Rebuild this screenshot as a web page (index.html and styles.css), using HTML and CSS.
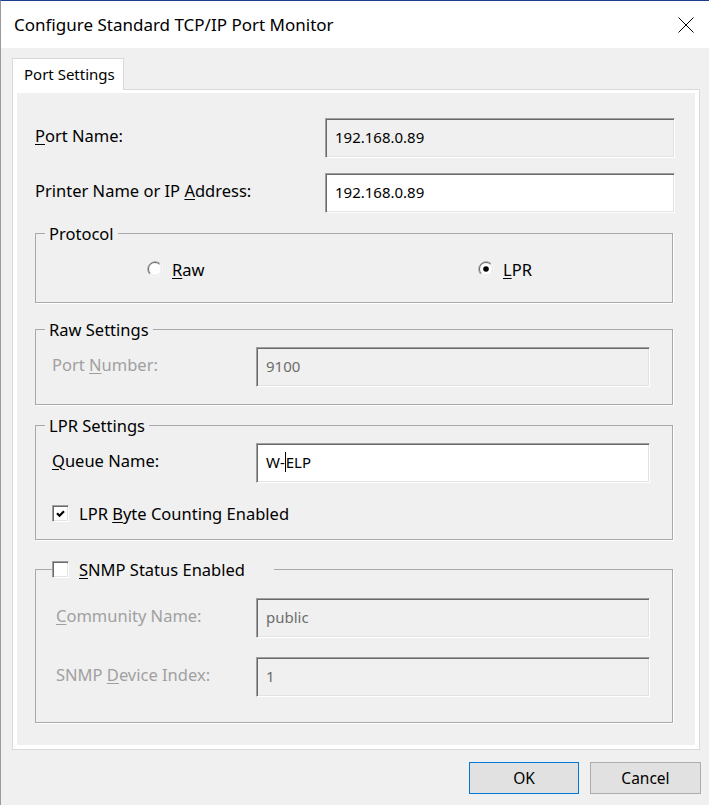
FILE: index.html
```html
<!DOCTYPE html>
<html>
<head>
  <title>Configure Standard TCP/IP Port Monitor</title>
  <meta charset="utf-8">
  <link rel="stylesheet" href="styles.css">
</head>
<body>
  <div class="window">
    <div class="titlebar">
      <span class="title">Configure Standard TCP/IP Port Monitor</span>
      <svg class="close" width="16" height="16" viewBox="0 0 16 16">
        <path d="M0.5 0.5 L15.5 15.5 M15.5 0.5 L0.5 15.5" stroke="#000" stroke-width="1" fill="none"/>
      </svg>
    </div>
    <div class="body">
      <div class="tabs">
        <div class="tab">Port Settings</div>
      </div>
      <div class="panel">
        <div class="page">
          <div class="row first">
            <span class="label"><u>P</u>ort Name:</span>
            <div class="field readonly">192.168.0.89</div>
          </div>
          <div class="row">
            <span class="label">Printer Name or IP <u>A</u>ddress:</span>
            <div class="field">192.168.0.89</div>
          </div>

          <fieldset class="group protocol">
            <legend>Protocol</legend>
            <div class="radios">
              <span class="radio">
                <svg width="16" height="16" viewBox="0 0 16 16">
                  <circle cx="8" cy="8" r="6.5" fill="#fff"/>
                  <path d="M2.7 13.3 A7.5 7.5 0 0 1 13.3 2.7" stroke="#a0a0a0" fill="none"/>
                  <path d="M13.3 2.7 A7.5 7.5 0 0 1 2.7 13.3" stroke="#fff" fill="none"/>
                  <path d="M3.4 12.6 A6.5 6.5 0 0 1 12.6 3.4" stroke="#696969" fill="none"/>
                  <path d="M12.6 3.4 A6.5 6.5 0 0 1 3.4 12.6" stroke="#e3e3e3" fill="none"/>
                </svg>
                <span><u>R</u>aw</span>
              </span>
              <span class="radio">
                <svg width="16" height="16" viewBox="0 0 16 16">
                  <circle cx="8" cy="8" r="6.5" fill="#fff"/>
                  <path d="M2.7 13.3 A7.5 7.5 0 0 1 13.3 2.7" stroke="#a0a0a0" fill="none"/>
                  <path d="M13.3 2.7 A7.5 7.5 0 0 1 2.7 13.3" stroke="#fff" fill="none"/>
                  <path d="M3.4 12.6 A6.5 6.5 0 0 1 12.6 3.4" stroke="#696969" fill="none"/>
                  <path d="M12.6 3.4 A6.5 6.5 0 0 1 3.4 12.6" stroke="#e3e3e3" fill="none"/>
                  <circle cx="8" cy="8" r="2.8" fill="#000"/>
                </svg>
                <span><u>L</u>PR</span>
              </span>
            </div>
          </fieldset>

          <fieldset class="group raw">
            <legend>Raw Settings</legend>
            <div class="grow">
              <span class="label disabled">Port <u>N</u>umber:</span>
              <div class="field readonly dim">9100</div>
            </div>
          </fieldset>

          <fieldset class="group lpr">
            <legend>LPR Settings</legend>
            <div class="grow">
              <span class="label"><u>Q</u>ueue Name:</span>
              <div class="field">W-<span class="caret"></span>ELP</div>
            </div>
            <div class="checkrow">
              <span class="check">
                <svg width="11" height="11" viewBox="0 0 11 11">
                  <path d="M2 5.2 L4.5 7.7 L9 3.2" stroke="#000" stroke-width="2.2" fill="none"/>
                </svg>
              </span>
              <span>LPR <u>B</u>yte Counting Enabled</span>
            </div>
          </fieldset>

          <fieldset class="group snmp">
            <legend>
              <span class="check"></span>
              <span><u>S</u>NMP Status Enabled</span>
            </legend>
            <div class="grow">
              <span class="label disabled"><u>C</u>ommunity Name:</span>
              <div class="field readonly dim">public</div>
            </div>
            <div class="grow second">
              <span class="label disabled">SNMP <u>D</u>evice Index:</span>
              <div class="field readonly dim">1</div>
            </div>
          </fieldset>
        </div>
      </div>
      <div class="buttons">
        <button class="btn default">OK</button>
        <button class="btn">Cancel</button>
      </div>
    </div>
  </div>
</body>
</html>
```

FILE: styles.css
```css
body {
  margin: 0;
  font-family: "Segoe UI", "Noto Sans", "Liberation Sans", sans-serif;
  font-size: 16.5px;
  color: #000;
}
u {
  text-decoration-thickness: 1px;
  text-underline-offset: 2px;
}
.window {
  width: 709px;
  height: 805px;
  box-sizing: border-box;
  border-top: 1px solid #1b3f8f;
  border-left: 1px solid #9a9a9a;
  background: #f0f0f0;
  overflow: hidden;
}
.titlebar {
  height: 47px;
  background: #fff;
  display: flex;
  align-items: center;
  justify-content: space-between;
  padding: 0 15px 0 13px;
}
.title {
  font-size: 17px;
}
.body {
  padding-top: 10px;
}
.tabs {
  display: flex;
  margin-left: 11px;
}
.tab {
  position: relative;
  z-index: 1;
  width: 112px;
  height: 32px;
  box-sizing: border-box;
  background: #fff;
  border: 1px solid #d9d9d9;
  border-bottom: none;
  margin-bottom: -1px;
  padding-left: 11px;
  line-height: 30px;
  font-size: 15px;
}
.panel {
  margin-left: 11px;
  width: 688px;
  height: 661px;
  box-sizing: border-box;
  border: 1px solid #d9d9d9;
  background: #fff;
  padding: 3px 4px 4px 4px;
}
.page {
  background: #f0f0f0;
  height: 652px;
  padding-top: 25px;
  box-sizing: border-box;
}
.row {
  display: flex;
  align-items: center;
  height: 40px;
  padding-left: 18px;
  margin-top: 15px;
}
.row.first {
  margin-top: 0;
}
.row .label {
  width: 290px;
}
.label {
  margin-bottom: 6px;
}
.label.disabled {
  color: #a0a0a0;
}
.field {
  width: 350px;
  height: 40px;
  box-sizing: border-box;
  background: #fff;
  border: 1px solid;
  border-color: #a0a0a0 #fff #fff #a0a0a0;
  box-shadow: inset 1px 1px #696969, inset -1px -1px #e3e3e3;
  padding: 0 0 3px 9px;
  display: flex;
  align-items: center;
  font-size: 15px;
}
.field.readonly {
  background: #f0f0f0;
}
.field.dim {
  color: #6d6d6d;
}
.caret {
  display: inline-block;
  width: 1px;
  height: 20px;
  background: #000;
}

.group {
  margin: 10px 22px 0 18px;
  padding: 0;
  min-width: 0;
  border: 1px solid #a9a9a9;
  box-shadow: 1px 1px 0 #fff;
}
.group legend {
  line-height: 21px;
  height: 21px;
  padding: 0 4px;
  margin-left: 9px;
}
.radios {
  display: grid;
  grid-template-columns: 331px auto;
  padding: 13px 0 21px 111px;
}
.radio {
  display: flex;
  align-items: center;
  gap: 9px;
  height: 24px;
}
.radio svg {
  flex: none;
}
.raw {
  margin-top: 16px;
}
.grow {
  display: flex;
  align-items: center;
  padding-left: 16px;
}
.grow .label {
  width: 204px;
}
.grow .field {
  width: 394px;
}
.raw .grow {
  padding: 7px 0 17px 16px;
}
.lpr .grow {
  padding-top: 7px;
}
.checkrow {
  display: flex;
  align-items: center;
  gap: 10px;
  height: 24px;
  margin: 18px 0 14px 16px;
}
.check {
  width: 17px;
  height: 17px;
  box-sizing: border-box;
  background: #fff;
  border: 1px solid;
  border-color: #a0a0a0 #fff #fff #a0a0a0;
  box-shadow: inset 1px 1px #696969, inset -1px -1px #e3e3e3;
  display: inline-flex;
  align-items: center;
  justify-content: center;
  flex: none;
}
.snmp {
  margin-top: 19px;
}
.snmp legend {
  display: flex;
  align-items: center;
  gap: 10px;
  margin-left: 16px;
  padding: 0 29px 0 0;
}
.snmp .grow {
  padding: 18px 0 0 20px;
}
.snmp .grow .label {
  width: 200px;
}
.snmp .grow.second {
  padding: 19px 0 25px 20px;
}

.buttons {
  display: flex;
  justify-content: flex-end;
  gap: 11px;
  margin-top: 12px;
  padding-right: 8px;
}
.btn {
  width: 111px;
  height: 32px;
  background: #e1e1e1;
  border: 1px solid #adadad;
  font-family: inherit;
  font-size: 15.5px;
  color: #000;
  padding: 0;
}
.btn.default {
  border-color: #0078d7;
  width: 110px;
}
```
